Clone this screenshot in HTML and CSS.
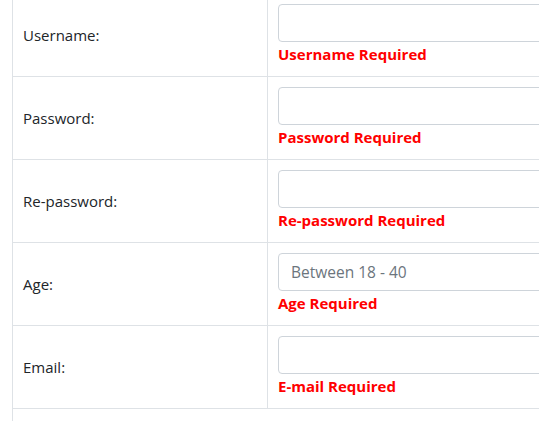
FILE: index.html
```html
<!DOCTYPE html>
<html>
<head>
<meta charset="utf-8">
<link rel="stylesheet" href="styles.css">
</head>
<body>
<div class="page">
<table class="form-table">
  <tr>
    <td class="label">Username:</td>
    <td class="field"><input class="control" type="text"><div class="error">Username Required</div></td>
  </tr>
  <tr>
    <td class="label">Password:</td>
    <td class="field"><input class="control" type="password"><div class="error">Password Required</div></td>
  </tr>
  <tr>
    <td class="label">Re-password:</td>
    <td class="field"><input class="control" type="password"><div class="error">Re-password Required</div></td>
  </tr>
  <tr>
    <td class="label">Age:</td>
    <td class="field"><input class="control" type="text" placeholder="Between 18 - 40"><div class="error">Age Required</div></td>
  </tr>
  <tr>
    <td class="label">Email:</td>
    <td class="field"><input class="control" type="text"><div class="error">E-mail Required</div></td>
  </tr>
  <tr>
    <td class="footer" colspan="2"></td>
  </tr>
</table>
</div>
</body>
</html>
```

FILE: styles.css
```css
html, body {
  margin: 0;
  padding: 0;
  background: #fff;
  overflow: hidden;
}
.page {
  padding-left: 12px;
  font-family: "Open Sans", "Noto Sans", sans-serif;
  font-size: 15px;
  color: #212529;
}
.form-table {
  margin-top: -7px;
  width: 760px;
  border-collapse: collapse;
}
.form-table td {
  border: 1px solid #dee2e6;
  padding: 10px 10px 11px 10px;
}
.label {
  width: 234px;
  vertical-align: middle;
}
.field {
  vertical-align: top;
}
.control {
  display: block;
  box-sizing: border-box;
  width: 100%;
  height: 38px;
  margin: 0;
  padding: 6px 12px;
  border: 1px solid #ced4da;
  border-radius: 4px;
  font-family: inherit;
  font-size: 15.5px;
  color: #495057;
  background: #fff;
}
.control::placeholder {
  color: #6c757d;
}
.error {
  color: #ff0000;
  font-weight: bold;
  line-height: 24px;
  height: 23px;
}
.footer {
  height: 60px;
}
```
